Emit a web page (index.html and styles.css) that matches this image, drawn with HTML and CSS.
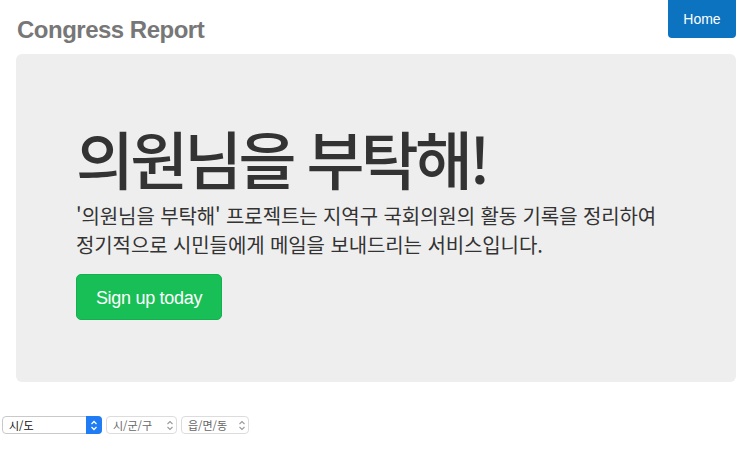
FILE: index.html
```html
<!DOCTYPE html>
<html lang="ko">
<head>
<meta charset="utf-8">
<title>Congress Report</title>
<link rel="stylesheet" href="styles.css">
</head>
<body>
<div class="container">
  <header class="header">
    <h3 class="brand">Congress Report</h3>
    <a class="home-btn" href="#">Home</a>
  </header>
  <section class="jumbotron">
    <h1 class="hero-title">의원님을 부탁해!</h1>
    <p class="lead">'의원님을 부탁해' 프로젝트는 지역구 국회의원의 활동 기록을 정리하여<br>정기적으로 시민들에게 메일을 보내드리는 서비스입니다.</p>
    <p class="cta-row"><a class="signup-btn" href="#">Sign up today</a></p>
  </section>
</div>
<div class="selects">
  <span class="select-wrap sel-sido">
    <select class="select"><option>시/도</option></select>
    <span class="arrow arrow-active"><svg width="8" height="11" viewBox="0 0 8 11"><path d="M1.5 4 L4 1.5 L6.5 4 M1.5 7 L4 9.5 L6.5 7" fill="none" stroke="#fff" stroke-width="1.3"/></svg></span>
  </span>
  <span class="select-wrap sel-sigungu">
    <select class="select select-muted"><option>시/군/구</option></select>
    <span class="arrow"><svg width="8" height="11" viewBox="0 0 8 11"><path d="M1.5 4 L4 1.5 L6.5 4 M1.5 7 L4 9.5 L6.5 7" fill="none" stroke="#9a9a9a" stroke-width="1.1"/></svg></span>
  </span>
  <span class="select-wrap sel-dong">
    <select class="select select-muted"><option>읍/면/동</option></select>
    <span class="arrow"><svg width="8" height="11" viewBox="0 0 8 11"><path d="M1.5 4 L4 1.5 L6.5 4 M1.5 7 L4 9.5 L6.5 7" fill="none" stroke="#9a9a9a" stroke-width="1.1"/></svg></span>
  </span>
</div>
</body>
</html>
```
FILE: styles.css
```css
* { box-sizing: border-box; }
html, body { margin: 0; padding: 0; background: #fff; }
body {
  font-family: "Liberation Sans", "Noto Sans CJK KR", sans-serif;
  color: #333;
  font-size: 14px;
  line-height: 1.42857;
}
.container { padding: 0 16px; }
.header {
  display: flex;
  justify-content: space-between;
  align-items: flex-start;
  height: 54px;
}
.brand {
  margin: 17px 0 0 1px;
  font-size: 24px;
  font-weight: bold;
  color: #777;
  line-height: 1.1;
  letter-spacing: -0.5px;
}
.home-btn {
  display: block;
  width: 68px;
  height: 38px;
  line-height: 38px;
  text-align: center;
  background: #0b73c0;
  color: #fff;
  text-decoration: none;
  font-size: 14px;
  border-radius: 0 0 4px 4px;
}
.jumbotron {
  background: #eee;
  border-radius: 6px;
  padding: 48px 60px;
  height: 328px;
  margin-bottom: 34px;
}
.hero-title {
  margin: 20px 0 10px;
  font-family: "Noto Sans CJK KR", sans-serif;
  font-size: 63px;
  font-weight: 500;
  line-height: 69px;
  letter-spacing: -0.06em;
  color: #333;
}
.lead {
  margin: 0 0 15px;
  font-family: "Noto Sans CJK KR", sans-serif;
  font-size: 20px;
  line-height: 29px;
  letter-spacing: -0.005em;
  color: #333;
}
.cta-row { margin: 0; }
.signup-btn {
  display: inline-block;
  width: 146px;
  height: 46px;
  line-height: 46px;
  text-align: center;
  background: #17bf56;
  border: 1px solid #14b04f;
  border-radius: 5px;
  color: #fff;
  text-decoration: none;
  font-family: "Liberation Sans", sans-serif;
  font-size: 18px;
  letter-spacing: -0.3px;
}
.selects {
  display: flex;
  gap: 4px;
  padding-left: 2px;
}
.select-wrap {
  position: relative;
  display: inline-block;
  height: 18px;
}
.sel-sido { width: 100px; }
.sel-sigungu { width: 71px; }
.sel-dong { width: 68px; }
.select {
  -webkit-appearance: none;
  appearance: none;
  width: 100%;
  height: 18px;
  margin: 0;
  padding: 0 0 0 6px;
  border: 1px solid #c9c9c9;
  border-radius: 4px;
  background: #fff;
  font-family: "Noto Sans CJK KR", sans-serif;
  font-size: 11px;
  line-height: 16px;
  color: #111;
}
.select-muted { color: #666; border-color: #dcdcdc; }
.arrow {
  position: absolute;
  top: 0;
  right: 0;
  width: 15px;
  height: 18px;
  display: flex;
  align-items: center;
  justify-content: center;
  pointer-events: none;
}
.arrow-active {
  background: #1f7cf4;
  border-radius: 0 4px 4px 0;
  width: 16px;
}
```
